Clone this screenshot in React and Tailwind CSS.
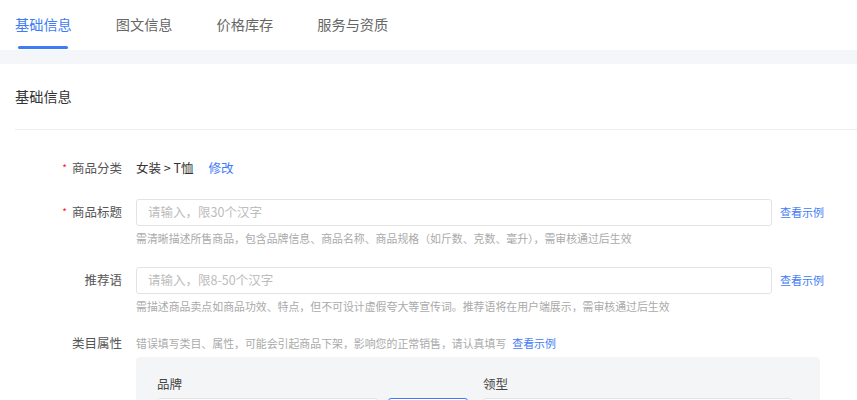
const TABS = ["基础信息", "图文信息", "价格库存", "服务与资质"];

function Label({ required, children }) {
  return (
    <div className="w-[107px] shrink-0 flex justify-end items-center text-[12.5px] text-[#555]">
      {required && <span className="text-[#f5222d] text-[10px] mr-[5px] mt-[-2px]">*</span>}
      <span>{children}</span>
    </div>
  );
}

function InputRow({ label, required, placeholder, help }) {
  return (
    <div className="flex flex-col">
      <div className="flex items-center h-[27px]">
        <Label required={required}>{label}</Label>
        <div className="ml-[14px] w-[636px] h-[27px] border border-[#e3e3e3] rounded-[3px] flex items-center px-[11px] text-[12.5px] text-[#bdbdbd]">
          {placeholder}
        </div>
        <a className="ml-[8px] text-[11px] text-[#3f7bf5]">查看示例</a>
      </div>
      <div className="ml-[121px] mt-[4px] text-[10.9px] leading-[16px] text-[#aaa]">{help}</div>
    </div>
  );
}

export default function App() {
  return (
    <div className="w-[857px] h-[400px] overflow-hidden bg-white" style={{ fontFamily: '"Noto Sans CJK SC", "Noto Sans", sans-serif' }}>
      {/* tabs */}
      <div className="flex h-[50px] pl-[15px] gap-[44px]">
        {TABS.map((t, i) => (
          <div key={t} className="relative flex items-center h-full">
            <span className={`text-[14.2px] ${i === 0 ? "text-[#3d7cf4]" : "text-[#666]"}`}>{t}</span>
            {i === 0 && <div className="absolute left-[3px] right-[4px] bottom-[1px] h-[3px] rounded-full bg-[#3d7cf4]" />}
          </div>
        ))}
      </div>
      <div className="h-[14px] bg-[#f5f6f9]" />

      {/* section header */}
      <div className="pl-[15px]">
        <div className="h-[65px] flex items-center text-[14.2px] text-[#333]">基础信息</div>
        <div className="h-px bg-[#eeeeee]" />
      </div>

      <div className="pl-[15px] pt-[28px] flex flex-col">
        <div className="flex items-center h-[20px]">
          <Label required>商品分类</Label>
          <span className="ml-[14px] text-[12.5px] text-[#333]">女装 &gt; T恤</span>
          <a className="ml-[15px] text-[12.5px] text-[#3f7bf5]">修改</a>
        </div>

        <div className="mt-[21px]">
          <InputRow
            required
            label="商品标题"
            placeholder="请输入，限30个汉字"
            help="需清晰描述所售商品，包含品牌信息、商品名称、商品规格（如斤数、克数、毫升），需审核通过后生效"
          />
        </div>

        <div className="mt-[21px]">
          <InputRow
            label="推荐语"
            placeholder="请输入，限8-50个汉字"
            help="需描述商品卖点如商品功效、特点，但不可设计虚假夸大等宣传词。推荐语将在用户端展示，需审核通过后生效"
          />
        </div>

        <div className="mt-[19px] flex items-center h-[20px]">
          <Label>类目属性</Label>
          <span className="ml-[14px] text-[10.9px] text-[#aaa]">错误填写类目、属性，可能会引起商品下架，影响您的正常销售，请认真填写</span>
          <a className="ml-[6px] text-[10.9px] text-[#3f7bf5]">查看示例</a>
        </div>

        <div className="ml-[121px] mt-[4px] w-[684px] h-[80px] bg-[#f4f5f7] rounded-[4px] px-[21px] pt-[18px] flex">
          <div className="flex flex-col">
            <span className="text-[12.5px] text-[#444]">品牌</span>
            <div className="mt-[4px] flex gap-[10px]">
              <div className="w-[221px] h-[27px] bg-white border border-[#e3e3e3] rounded-[3px]" />
              <div className="w-[80px] h-[27px] bg-white border border-[#3f7bf5] rounded-[3px]" />
            </div>
          </div>
          <div className="ml-[15px] flex flex-col">
            <span className="text-[12.5px] text-[#444]">领型</span>
            <div className="mt-[4px] w-[309px] h-[27px] bg-white border border-[#e3e3e3] rounded-[3px]" />
          </div>
        </div>
      </div>
    </div>
  );
}
